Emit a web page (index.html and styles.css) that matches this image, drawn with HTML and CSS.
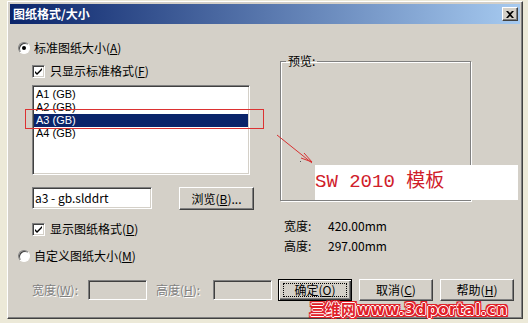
FILE: index.html
```html
<!DOCTYPE html>
<html lang="zh-CN">
<head>
  <meta charset="UTF-8">
  <meta name="viewport" content="width=device-width, initial-scale=1.0">
  <title>图纸格式/大小</title>
  <link rel="stylesheet" href="styles.css">
</head>
<body>
  <div class="window">
    <div class="titlebar">
      <span class="title">图纸格式/大小</span>
      <span class="close">
        <svg width="8" height="7" viewBox="0 0 8 7"><path d="M0 0h2l2 2 2-2h2L5 3.5 8 7H6L4 5 2 7H0l3-3.5z" fill="#000"/></svg>
      </span>
    </div>

    <div class="main">
      <div class="left">
        <label class="radio-row"><span class="radio on"></span>标准图纸大小(<u>A</u>)</label>
        <label class="check-row"><span class="check"><svg width="9" height="9" viewBox="0 0 9 9"><path d="M1 4l2 2 5-5v2L3 8 1 6z" fill="#000"/></svg></span>只显示标准格式(<u>F</u>)</label>
        <ul class="list">
          <li>A1 (GB)</li>
          <li>A2 (GB)</li>
          <li class="sel">A3 (GB)</li>
          <li>A4 (GB)</li>
        </ul>
        <div class="file-row">
          <div class="field">a3 - gb.slddrt</div>
          <button class="btn browse">浏览(<u>B</u>)...</button>
        </div>
        <label class="check-row second"><span class="check"><svg width="9" height="9" viewBox="0 0 9 9"><path d="M1 4l2 2 5-5v2L3 8 1 6z" fill="#000"/></svg></span>显示图纸格式(<u>D</u>)</label>
        <label class="radio-row second"><span class="radio"></span>自定义图纸大小(<u>M</u>)</label>
      </div>

      <div class="right">
        <fieldset class="preview">
          <legend>预览:</legend>
        </fieldset>
        <div class="size-row"><span class="key">宽度:</span><span>420.00mm</span></div>
        <div class="size-row"><span class="key">高度:</span><span>297.00mm</span></div>
      </div>
    </div>

    <div class="bottom">
      <span class="dim lbl-w">宽度(<u>W</u>):</span>
      <span class="field off"></span>
      <span class="dim lbl-h">高度(<u>H</u>):</span>
      <span class="field off"></span>
      <div class="actions">
        <button class="btn default"><span class="focus">确定(<u>O</u>)</span></button>
        <button class="btn">取消(<u>C</u>)</button>
        <button class="btn">帮助(<u>H</u>)</button>
      </div>
    </div>

    <!-- annotations drawn over the screenshot -->
    <div class="mark"></div>
    <svg class="arrow" width="50" height="45" viewBox="0 0 50 45">
      <path d="M17 10L52 38" stroke="#d83030" stroke-width="1" fill="none"/>
      <path d="M44 28L52 37L41 33" stroke="#d83030" stroke-width="1" fill="none"/>
      <rect x="40" y="36" width="1" height="1" fill="#555"/>
    </svg>
    <div class="note">SW 2010 模板</div>
    <div class="watermark">三维网www.3dportal.cn</div>
  </div>
</body>
</html>
```

FILE: styles.css
```css
* {
  margin: 0;
  padding: 0;
  box-sizing: border-box;
}

body {
  background-color: #ece9d8;
  font: 12px/14px "Noto Sans CJK SC", sans-serif;
  color: #000;
}

.window {
  position: relative;
  width: 516px;
  height: 318px;
  margin: 1px 0 0 7px;
  padding: 2px;
  background-color: #d4d0c8;
  border: 1px solid;
  border-color: #fff #404040 #404040 #fff;
  box-shadow: inset -1px -1px #808080;
}

.titlebar {
  display: flex;
  align-items: center;
  justify-content: space-between;
  height: 20px;
  padding: 0 2px 0 3px;
  background: linear-gradient(to right, #0a246a, #a6caf0);
}
.title {
  color: #fff;
  font-weight: 700;
}
.close {
  display: flex;
  justify-content: center;
  align-items: center;
  width: 16px;
  height: 14px;
  background-color: #d4d0c8;
  border: 1px solid;
  border-color: #fff #404040 #404040 #fff;
  box-shadow: inset -1px -1px #808080;
}

.main {
  display: flex;
  height: 254px;
}
.left {
  display: flex;
  flex-direction: column;
  width: 270px;
}
.right {
  flex: 1;
}

label {
  display: flex;
  align-items: center;
  height: 16px;
}
u {
  text-decoration: underline;
  text-underline-offset: 1px;
}

.radio-row {
  margin-top: 16px;
  padding-left: 8px;
}
.radio-row.second {
  margin-top: 11px;
}
.radio {
  position: relative;
  width: 12px;
  height: 12px;
  margin-right: 4px;
  background-color: #fff;
  border: 1px solid;
  border-color: #808080 #fff #fff #808080;
  border-radius: 50%;
  box-shadow: inset 1px 1px #404040;
}
.radio.on::after {
  content: "";
  position: absolute;
  top: 3px;
  left: 3px;
  width: 4px;
  height: 4px;
  background-color: #000;
  border-radius: 50%;
}

.check-row {
  margin-top: 7px;
  padding-left: 22px;
}
.check-row.second {
  margin-top: 11px;
}
.check {
  display: flex;
  justify-content: center;
  align-items: center;
  width: 13px;
  height: 13px;
  margin-right: 5px;
  background-color: #fff;
  border: 1px solid;
  border-color: #808080 #fff #fff #808080;
  box-shadow: inset 1px 1px #404040, inset -1px -1px #d4d0c8;
}

.list {
  list-style: none;
  width: 218px;
  height: 90px;
  margin: 6px 0 0 22px;
  padding: 2px 1px;
  background-color: #fff;
  border: 1px solid;
  border-color: #808080 #fff #fff #808080;
  box-shadow: inset 1px 1px #404040, inset -1px -1px #d4d0c8;
  font: 11px/13px "Liberation Sans", sans-serif;
}
.list li {
  height: 13px;
  padding-left: 2px;
}
.list li.sel {
  background-color: #0a246a;
  color: #fff;
}

.file-row {
  display: flex;
  align-items: flex-start;
  gap: 27px;
  margin: 12px 0 0 22px;
}
.field {
  width: 120px;
  height: 22px;
  padding: 3px 2px 0;
  background-color: #fff;
  border: 1px solid;
  border-color: #808080 #fff #fff #808080;
  box-shadow: inset 1px 1px #404040, inset -1px -1px #d4d0c8;
}
.field.off {
  width: 59px;
  height: 20px;
  background-color: #d4d0c8;
}

.btn {
  display: flex;
  justify-content: center;
  align-items: center;
  width: 74px;
  height: 22px;
  background-color: #d4d0c8;
  border: 1px solid;
  border-color: #fff #404040 #404040 #fff;
  box-shadow: inset -1px -1px #808080;
  font: inherit;
  color: #000;
}
.btn.browse {
  width: 75px;
  height: 23px;
}
.btn.default {
  border-color: #000;
  box-shadow: inset 1px 1px #fff, inset -1px -1px #404040, inset -2px -2px #808080;
}
.focus {
  display: flex;
  justify-content: center;
  align-items: center;
  width: 64px;
  height: 14px;
  border: 1px dotted #000;
}

.preview {
  width: 191px;
  height: 147px;
  margin-top: 30px;
  border: 1px solid #808080;
  box-shadow: inset 1px 1px #fff, 1px 1px #fff;
}
.preview legend {
  margin-left: 5px;
  padding: 0 2px;
}

.size-row {
  display: flex;
  height: 14px;
  margin-top: 6px;
  padding-left: 4px;
}
.preview + .size-row {
  margin-top: 18px;
}
.key {
  width: 44px;
}

.bottom {
  display: flex;
  align-items: center;
  height: 23px;
  padding-left: 22px;
}
.dim {
  color: #808080;
  text-shadow: 1px 1px #fff;
}
.lbl-w {
  width: 56px;
}
.lbl-h {
  width: 57px;
  margin-left: 9px;
}
.actions {
  display: flex;
  gap: 7px;
  margin-left: 6px;
}

.mark {
  position: absolute;
  top: 107px;
  left: 17px;
  width: 239px;
  height: 20px;
  border: 1px solid #dc3232;
}
.arrow {
  position: absolute;
  top: 123px;
  left: 252px;
  overflow: visible;
}
.note {
  position: absolute;
  top: 163px;
  left: 307px;
  width: 203px;
  height: 35px;
  padding-top: 6px;
  background-color: #fff;
  color: #d0202a;
  font: 19px/22px "Liberation Mono", "Noto Sans CJK SC", monospace;
}
.watermark {
  position: absolute;
  top: 300px;
  left: 302px;
  color: #e02028;
  font: 700 15px/16px "DejaVu Sans", "Noto Sans CJK SC", sans-serif;
  letter-spacing: 0.5px;
  text-shadow: 1px 0 #fff, -1px 0 #fff, 0 1px #fff, 0 -1px #fff,
    2px 0 #e02028, -2px 0 #e02028, 0 2px #e02028, 0 -2px #e02028,
    2px 2px #e02028, -2px -2px #e02028, 2px -2px #e02028, -2px 2px #e02028;
}
```
